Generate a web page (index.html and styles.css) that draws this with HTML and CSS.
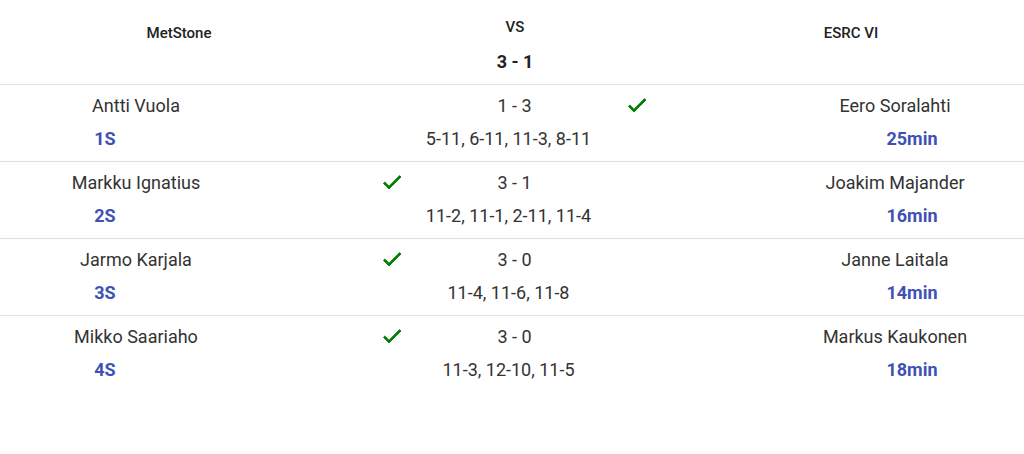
FILE: index.html
```html
<!DOCTYPE html>
<html lang="fi">
<head>
<meta charset="utf-8">
<title>MetStone vs ESRC VI</title>
<link rel="stylesheet" href="styles.css">
</head>
<body>
<div class="match">
  <div class="header">
    <div class="team">MetStone</div>
    <div class="vs-block">
      <div class="vs">VS</div>
      <div class="total">3 - 1</div>
    </div>
    <div class="team">ESRC VI</div>
  </div>

  <div class="game">
    <div class="player home"><div class="name">Antti Vuola</div><div class="meta">1S</div></div>
    <div class="win left"></div>
    <div class="score"><div class="result">1 - 3</div><div class="sets">5-11, 6-11, 11-3, 8-11</div></div>
    <div class="win right"><svg class="check" viewBox="0 0 24 24" width="24" height="24"><path d="M9 16.17L4.83 12l-1.42 1.41L9 19 21 7l-1.41-1.41z"/></svg></div>
    <div class="player away"><div class="name">Eero Soralahti</div><div class="meta">25min</div></div>
  </div>

  <div class="game">
    <div class="player home"><div class="name">Markku Ignatius</div><div class="meta">2S</div></div>
    <div class="win left"><svg class="check" viewBox="0 0 24 24" width="24" height="24"><path d="M9 16.17L4.83 12l-1.42 1.41L9 19 21 7l-1.41-1.41z"/></svg></div>
    <div class="score"><div class="result">3 - 1</div><div class="sets">11-2, 11-1, 2-11, 11-4</div></div>
    <div class="win right"></div>
    <div class="player away"><div class="name">Joakim Majander</div><div class="meta">16min</div></div>
  </div>

  <div class="game">
    <div class="player home"><div class="name">Jarmo Karjala</div><div class="meta">3S</div></div>
    <div class="win left"><svg class="check" viewBox="0 0 24 24" width="24" height="24"><path d="M9 16.17L4.83 12l-1.42 1.41L9 19 21 7l-1.41-1.41z"/></svg></div>
    <div class="score"><div class="result">3 - 0</div><div class="sets">11-4, 11-6, 11-8</div></div>
    <div class="win right"></div>
    <div class="player away"><div class="name">Janne Laitala</div><div class="meta">14min</div></div>
  </div>

  <div class="game">
    <div class="player home"><div class="name">Mikko Saariaho</div><div class="meta">4S</div></div>
    <div class="win left"><svg class="check" viewBox="0 0 24 24" width="24" height="24"><path d="M9 16.17L4.83 12l-1.42 1.41L9 19 21 7l-1.41-1.41z"/></svg></div>
    <div class="score"><div class="result">3 - 0</div><div class="sets">11-3, 12-10, 11-5</div></div>
    <div class="win right"></div>
    <div class="player away"><div class="name">Markus Kaukonen</div><div class="meta">18min</div></div>
  </div>
</div>
</body>
</html>
```

FILE: styles.css
```css
html, body {
  margin: 0;
  padding: 0;
  background: #ffffff;
}

body {
  font-family: Roboto, "Liberation Sans", Arial, sans-serif;
  color: #333333;
}

.match {
  width: 1024px;
}

.header {
  display: grid;
  grid-template-columns: repeat(3, 336px);
  padding-left: 11px;
  height: 84px;
  border-bottom: 1px solid #e0e0e0;
  text-align: center;
}

.team {
  font-size: 15px;
  font-weight: 500;
  line-height: 24px;
  padding-top: 21px;
  color: #222222;
}

.vs-block {
  padding-top: 15px;
  display: flex;
  flex-direction: column;
  gap: 11px;
}

.vs {
  font-size: 15px;
  font-weight: 500;
  line-height: 24px;
  color: #222222;
}

.total {
  font-size: 18px;
  font-weight: 700;
  line-height: 24px;
  color: #222222;
}

.game {
  display: grid;
  grid-template-columns: 272px 96px 48px 197px 48px 105px 1fr;
  padding: 9px 0 10px;
  border-bottom: 1px solid #e0e0e0;
  font-size: 18px;
  line-height: 24px;
  text-align: center;
}

.game:last-child {
  border-bottom: none;
}

.player {
  display: flex;
  flex-direction: column;
  gap: 9px;
}

.player.home {
  grid-column: 1;
}

.player.away {
  grid-column: 7;
}

.name {
  color: #333333;
}

.meta {
  font-weight: 700;
  color: #3f51b5;
}

.home .meta {
  padding-right: 62px;
}

.away .meta {
  padding-left: 34px;
}

.win {
  display: flex;
  justify-content: center;
  align-items: flex-start;
  margin-top: -1px;
}

.win.left {
  grid-column: 3;
}

.win.right {
  grid-column: 5;
}

.check {
  display: block;
  fill: #008000;
  stroke: #008000;
  stroke-width: 0.9;
  stroke-linejoin: miter;
}

.score {
  grid-column: 4;
  display: flex;
  flex-direction: column;
  gap: 9px;
}

.sets {
  padding-right: 12px;
}
```
